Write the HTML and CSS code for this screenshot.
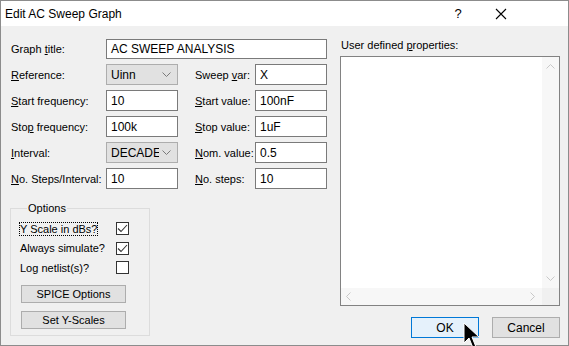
FILE: index.html
```html
<!DOCTYPE html>
<html lang="en">
  <head>
    <meta charset="UTF-8" />
    <title>Edit AC Sweep Graph</title>
    <link rel="stylesheet" href="styles.css">
  </head>
  <body>
    <div class="dialog">
      <header class="titlebar">
        <span class="title">Edit AC Sweep Graph</span>
        <span class="help">?</span>
        <span class="close">
          <svg width="12" height="12" viewBox="0 0 12 12"><path d="M1 1 L11 11 M11 1 L1 11" stroke="#000" stroke-width="1.1" fill="none"/></svg>
        </span>
      </header>

      <div class="content">
        <div class="left">
          <div class="form">
            <label>Graph <u>t</u>itle:</label>
            <div class="field wide">AC SWEEP ANALYSIS</div>

            <label><u>R</u>eference:</label>
            <div class="combo"><span>Uinn</span><svg width="9" height="5" viewBox="0 0 9 5"><path d="M0.5 0.5 L4.5 4.5 L8.5 0.5" stroke="#7a7a7a" fill="none"/></svg></div>
            <label class="rlabel">Sweep <u>v</u>ar:</label>
            <div class="field">X</div>

            <label><u>S</u>tart frequency:</label>
            <div class="field">10</div>
            <label class="rlabel"><u>S</u>tart value:</label>
            <div class="field">100nF</div>

            <label>Sto<u>p</u> frequency:</label>
            <div class="field">100k</div>
            <label class="rlabel"><u>S</u>top value:</label>
            <div class="field">1uF</div>

            <label><u>I</u>nterval:</label>
            <div class="combo"><span>DECADES</span><svg width="9" height="5" viewBox="0 0 9 5"><path d="M0.5 0.5 L4.5 4.5 L8.5 0.5" stroke="#7a7a7a" fill="none"/></svg></div>
            <label class="rlabel"><u>N</u>om. value:</label>
            <div class="field">0.5</div>

            <label><u>N</u>o. Steps/Interval:</label>
            <div class="field">10</div>
            <label class="rlabel"><u>N</u>o. steps:</label>
            <div class="field">10</div>
          </div>

          <fieldset class="options">
            <legend>Options</legend>
            <div class="check-row">
              <span class="focus">Y Scale in dBs?</span>
              <span class="box checked"><svg width="11" height="9" viewBox="0 0 11 9"><path d="M1 4.5 L4 7.5 L10 1" stroke="#333" stroke-width="1.1" fill="none"/></svg></span>
            </div>
            <div class="check-row">
              <span>Always simulate?</span>
              <span class="box checked"><svg width="11" height="9" viewBox="0 0 11 9"><path d="M1 4.5 L4 7.5 L10 1" stroke="#333" stroke-width="1.1" fill="none"/></svg></span>
            </div>
            <div class="check-row">
              <span>Log netlist(s)?</span>
              <span class="box"></span>
            </div>
            <button class="small-btn first">SPICE Options</button>
            <button class="small-btn">Set Y-Scales</button>
          </fieldset>
        </div>

        <div class="right">
          <label class="list-label">User defined <u>p</u>roperties:</label>
          <div class="listbox">
            <div class="list-area"></div>
            <div class="vscroll">
              <svg width="9" height="5" viewBox="0 0 9 5"><path d="M0.5 4.5 L4.5 0.5 L8.5 4.5" stroke="#c8c8c8" fill="none"/></svg>
              <svg width="9" height="5" viewBox="0 0 9 5"><path d="M0.5 0.5 L4.5 4.5 L8.5 0.5" stroke="#c8c8c8" fill="none"/></svg>
            </div>
            <div class="hscroll">
              <svg width="5" height="9" viewBox="0 0 5 9"><path d="M4.5 0.5 L0.5 4.5 L4.5 8.5" stroke="#c8c8c8" fill="none"/></svg>
              <svg width="5" height="9" viewBox="0 0 5 9"><path d="M0.5 0.5 L4.5 4.5 L0.5 8.5" stroke="#c8c8c8" fill="none"/></svg>
            </div>
            <div class="corner"></div>
          </div>
          <div class="actions">
            <button class="btn default">OK</button>
            <button class="btn">Cancel</button>
          </div>
        </div>
      </div>

      <!-- mouse pointer over the OK button -->
      <svg class="pointer" width="20" height="28" viewBox="0 0 20 28">
        <path d="M1 1 L1 21 L6 16 L10 26 L13 25 L9 15 L16 15 Z" fill="#000" stroke="#fff" stroke-width="1"/>
      </svg>
    </div>
  </body>
</html>
```

FILE: styles.css
```css
* {
  box-sizing: border-box;
  margin: 0;
  padding: 0;
}

html,
body {
  width: 569px;
  height: 346px;
  overflow: hidden;
  font-family: "Liberation Sans", Arial, sans-serif;
  font-size: 11px;
  color: #000;
}

.dialog {
  position: relative;
  width: 569px;
  height: 346px;
  background-color: #f0f0f0;
  border: 1px solid #8c8c8c;
  display: flex;
  flex-direction: column;
}

.titlebar {
  height: 25px;
  background-color: #fff;
  display: flex;
  align-items: center;
  padding-left: 4px;
}

.title {
  font-size: 12px;
  flex: 1;
}

.help {
  font-size: 13px;
  width: 40px;
  text-align: center;
}

.close {
  width: 46px;
  height: 25px;
  display: flex;
  align-items: center;
  justify-content: center;
  margin-right: 44px;
}

.content {
  flex: 1;
  display: flex;
  padding: 13px 0 0 9px;
}

.left {
  width: 330px;
  display: flex;
  flex-direction: column;
}

.form {
  display: grid;
  grid-template-columns: 95px 72px 77px 72px;
  grid-template-rows: 20px repeat(5, 21px);
  row-gap: 5px;
  margin-left: 1px;
  align-items: center;
}

.rlabel {
  padding-left: 17px;
}

.field {
  height: 100%;
  background-color: #fff;
  border: 1px solid #7a7a7a;
  display: flex;
  align-items: center;
  padding-left: 4px;
  font-size: 12px;
  white-space: nowrap;
  overflow: hidden;
}

.wide {
  grid-column: 2 / 5;
}

.combo {
  height: 100%;
  background-color: #e1e1e1;
  border: 1px solid #adadad;
  display: flex;
  align-items: center;
  padding: 0 6px 0 4px;
  font-size: 12px;
  overflow: hidden;
}

.combo span {
  flex: 1;
  white-space: nowrap;
  overflow: hidden;
}

.combo svg {
  flex-shrink: 0;
  margin-left: 3px;
}

.options {
  margin-top: 13px;
  width: 140px;
  height: 134px;
  border: 1px solid #dcdcdc;
  padding: 5px 0 0 9px;
}

.options legend {
  padding: 0 1px;
  margin-left: 7px;
  font-size: 11px;
}

.check-row {
  display: flex;
  align-items: center;
  justify-content: space-between;
  width: 109px;
  height: 19.5px;
}

.focus {
  outline: 1px dotted #000;
}

.box {
  width: 13px;
  height: 13px;
  border: 1px solid #333;
  background-color: #fff;
  display: flex;
  align-items: center;
  justify-content: center;
}

.small-btn {
  display: block;
  width: 105px;
  height: 18px;
  margin: 8px 0 0 1px;
  font-family: inherit;
  font-size: 11px;
  background-color: #e1e1e1;
  border: 1px solid #adadad;
  color: #000;
}

.small-btn.first {
  margin-top: 7px;
}

.right {
  width: 220px;
  display: flex;
  flex-direction: column;
}

.list-label {
  height: 17px;
  padding-left: 1px;
  font-size: 11px;
}

.listbox {
  height: 250px;
  border: 1px solid #828282;
  background-color: #fff;
  display: grid;
  grid-template-columns: 1fr 17px;
  grid-template-rows: 1fr 17px;
}

.vscroll {
  background-color: #f7f7f7;
  display: flex;
  flex-direction: column;
  align-items: center;
  justify-content: space-between;
  padding: 7px 0 7px;
}

.hscroll {
  background-color: #f7f7f7;
  display: flex;
  align-items: center;
  justify-content: space-between;
  padding: 0 7px 0 5px;
}

.corner {
  background-color: #f0f0f0;
}

.actions {
  display: flex;
  justify-content: flex-end;
  gap: 13px;
  margin-top: 11px;
}

.btn {
  width: 68px;
  height: 21px;
  font-family: inherit;
  font-size: 12px;
  background-color: #e1e1e1;
  border: 1px solid #adadad;
  color: #000;
}

.btn.default {
  background-color: #e5f1fb;
  border-color: #0078d7;
}

.pointer {
  position: absolute;
  left: 462px;
  top: 321px;
}
```
